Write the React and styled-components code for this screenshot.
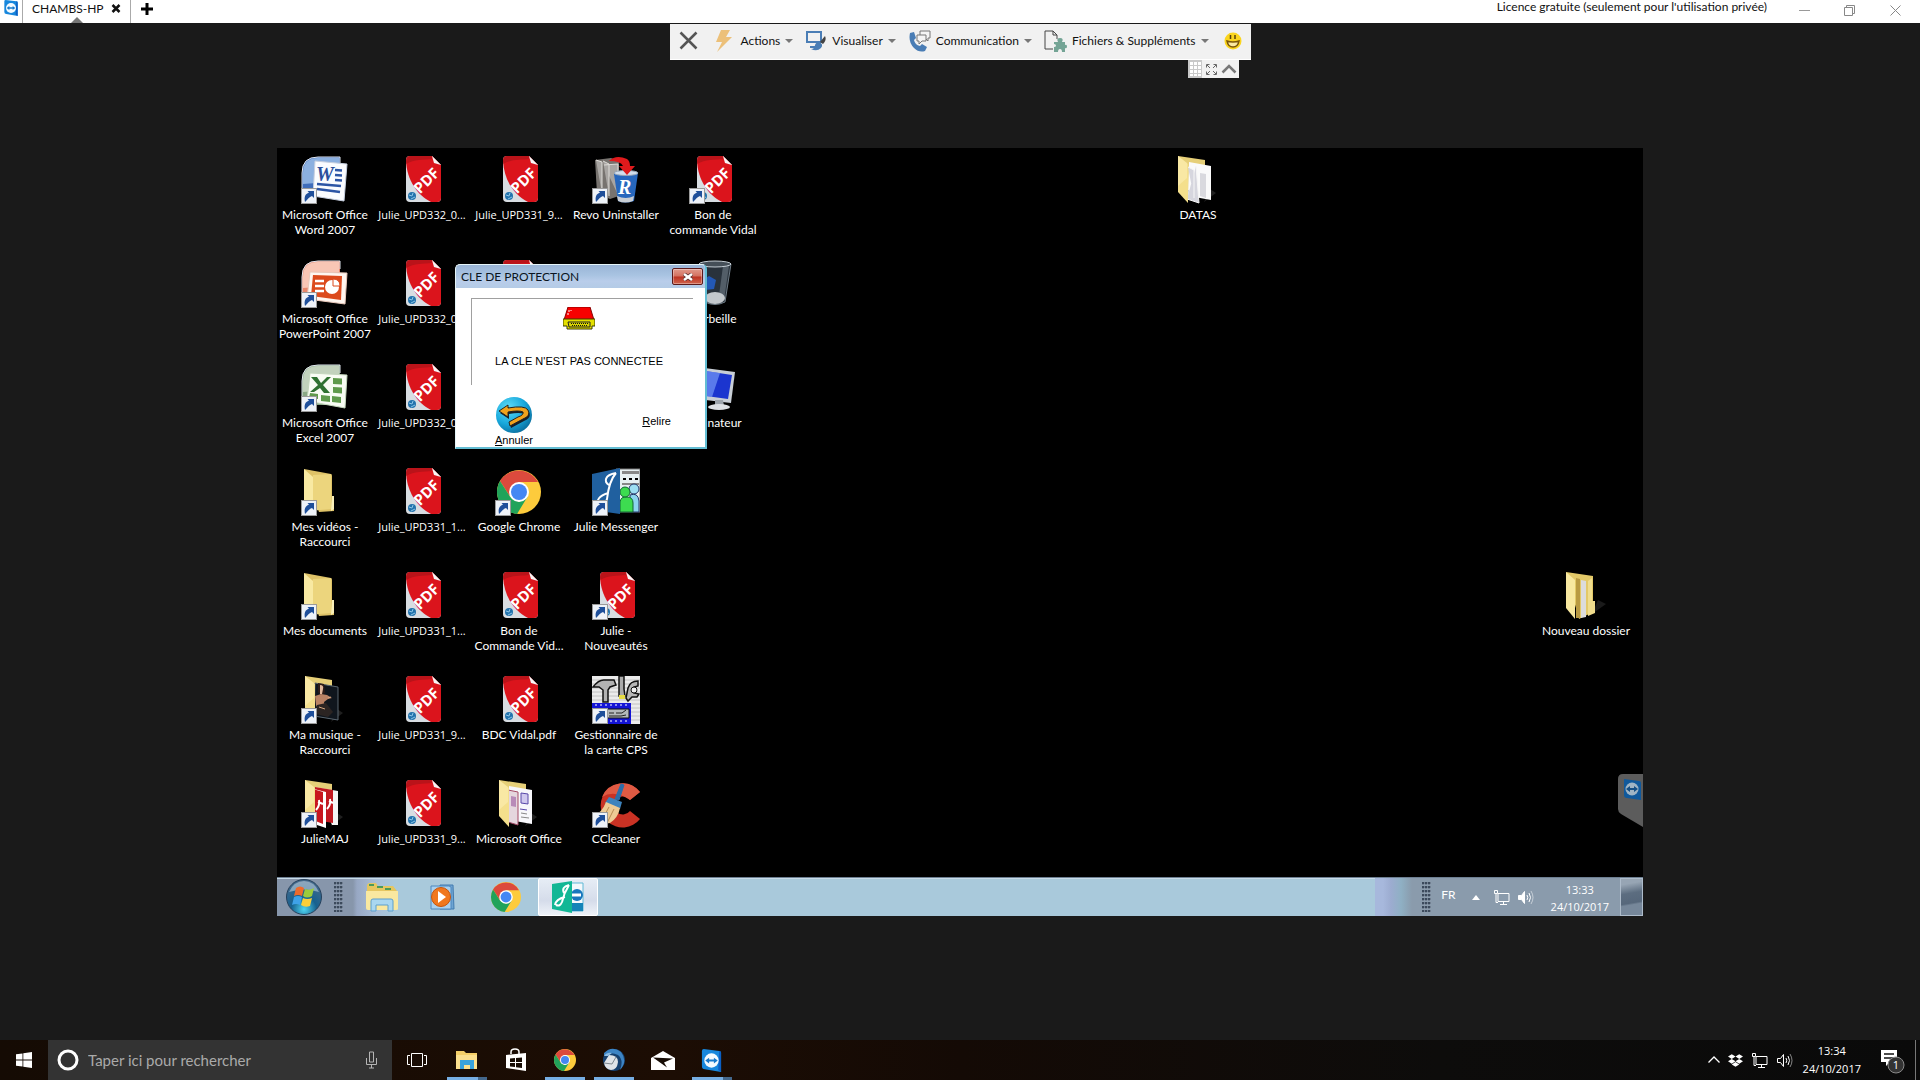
import React from 'react';
import styled, { createGlobalStyle, css } from 'styled-components';
import { FaDropbox } from 'react-icons/fa';

const GlobalStyle = createGlobalStyle`
  * {
    box-sizing: border-box;
  }

  body {
    margin: 0;
    background: #1a1a1a;
    font-family: Lato, 'Open Sans', sans-serif;
    font-size: 12px;
    line-height: 15px;
  }

  button {
    margin: 0;
    padding: 0;
    border: 0;
    background: none;
    color: inherit;
    font: inherit;
    cursor: default;
  }

  svg {
    display: block;
    flex-shrink: 0;
  }
`;

const Page = styled.div`
  display: grid;
  grid-template-rows: 23px 1fr 40px;
  min-height: 100vh;
`;

/* ---------- window title bar ---------- */

const TitleBar = styled.header`
  display: flex;
  align-items: flex-start;
  background: #fff;
  color: #111;
  line-height: 13px;
  overflow: hidden;
`;

const AppBadge = styled.div`
  width: 22px;
  padding-left: 3px;
`;

const SessionTab = styled.div`
  position: relative;
  display: flex;
  align-items: center;
  justify-content: space-between;
  width: 109px;
  height: 23px;
  padding: 0 9px 7px;
  border: solid #aaa;
  border-width: 0 1px;

  &::after {
    content: '';
    position: absolute;
    left: 48px;
    bottom: 0;
    border: solid transparent;
    border-width: 0 6px 6px;
    border-bottom-color: #777;
  }
`;

const NewTab = styled.button`
  height: 17px;
  padding-left: 10px;
`;

const Licence = styled.span`
  margin-left: auto;
  margin-right: 32px;
`;

const WindowControls = styled.div`
  display: flex;
  gap: 34px;
  height: 20px;
  align-items: center;
  padding-right: 19px;
`;

/* ---------- viewer ---------- */

const Viewer = styled.main`
  position: relative;
  display: flex;
  align-items: center;
  justify-content: center;
  padding-top: 1px;
`;

const FloatingBar = styled.div`
  position: absolute;
  top: 1px;
  left: 0;
  right: 0;
  width: max-content;
  margin: 0 auto;
  display: flex;
  flex-direction: column;
  align-items: flex-end;
`;

const Toolbar = styled.div`
  display: flex;
  align-items: center;
  gap: 12px;
  height: 36px;
  padding: 0 9px 2px;
  background: #f1f1f1;
  border-bottom: 1px solid #fff;
  color: #111;
`;

const EndSession = styled.button`
  margin-right: 4px;
`;

const Feedback = styled.button`
  margin-left: 3px;
`;

const ToolButton = styled.button`
  display: flex;
  align-items: center;
  gap: 5px;
  height: 30px;
`;

const Caret = styled.span`
  border: solid transparent;
  border-width: 4px 4px 0;
  border-top-color: #777;
`;

const ToolbarHandle = styled.div`
  display: flex;
  align-items: center;
  gap: 4px;
  height: 18px;
  margin-right: 12px;
  padding-right: 2px;
  background: #f1f1f1;
`;

const RemoteScreen = styled.section`
  position: relative;
  display: flex;
  flex-direction: column;
  width: 100%;
  max-width: 1366px;
  height: 768px;
  background: #000;
  color: #fff;
  overflow: hidden;
`;

const Desktop = styled.div`
  flex: 1;
  display: grid;
  grid-template-columns: repeat(14, 96px);
  grid-template-rows: repeat(7, 104px);
  column-gap: 1px;
  min-height: 0;
`;

const Shortcut = styled.div`
  grid-column: ${({ $col }) => $col};
  grid-row: ${({ $row }) => $row};
  display: flex;
  flex-direction: column;
  align-items: center;
  gap: 3px;
  padding-top: 8px;
  text-align: center;
  white-space: pre;
`;

const ShortcutLabel = styled.span`
  ${({ $fileName }) =>
    $fileName &&
    css`
      font-family: 'Open Sans', sans-serif;
      font-size: 11px;
    `}
`;

/* ---------- dialog ---------- */

const Dialog = styled.section`
  position: absolute;
  left: 178px;
  top: 116px;
  width: 252px;
  height: 185px;
  display: flex;
  flex-direction: column;
  border: 1px solid #e4f4f8;
  border-right: 2px solid #63bdd3;
  border-bottom: 2px solid #63bdd3;
  border-radius: 5px 5px 0 0;
  background: #fff;
  color: #000;
  overflow: hidden;
`;

const DialogTitle = styled.div`
  display: flex;
  align-items: center;
  justify-content: space-between;
  height: 23px;
  padding: 0 2px 0 5px;
  background: linear-gradient(#99b4d6, #a9c4e2 45%, #b9cdea 70%, #b4cbe6);
  color: #0a1420;
`;

const CloseButton = styled.button`
  display: grid;
  place-items: center;
  width: 31px;
  height: 17px;
  border: 1px solid #5c1a1a;
  border-radius: 2px;
  background: linear-gradient(#e09a8c, #d4705f 48%, #bc3222 52%, #d0634c);
  box-shadow: inset 0 0 0 1px #ffffff55;
`;

const DialogMessage = styled.div`
  display: flex;
  flex-direction: column;
  align-items: center;
  gap: 23px;
  height: 87px;
  margin: 10px 12px 0 15px;
  padding: 8px 7px 0 0;
  border: solid #a0a0a0;
  border-width: 1px 0 0 1px;
  font: 11px/16px 'Liberation Sans', Arial, sans-serif;
`;

const DialogActions = styled.div`
  display: flex;
  justify-content: space-between;
  align-items: flex-start;
  margin-top: 12px;
  padding: 0 34px 0 39px;
  font: 11px/14px 'Liberation Sans', Arial, sans-serif;
`;

const CancelButton = styled.button`
  display: flex;
  flex-direction: column;
  align-items: center;
`;

const RereadButton = styled.button`
  height: 48px;
`;

const SideTab = styled.div`
  position: absolute;
  right: 0;
  bottom: 89px;
`;

/* ---------- remote taskbar ---------- */

const RemoteTaskbar = styled.div`
  display: flex;
  align-items: center;
  height: 39px;
  border-top: 1px solid #6d7f92;
  box-shadow: inset 0 1px 0 #c8dbe8;
  background: linear-gradient(90deg, #8796ab 0 76px, #98a8c4 80px, #a9bfd8 100px, #a9c9db 116px);
`;

const StartOrb = styled.button`
  margin-left: 9px;
  margin-right: 12px;
`;

const Grip = styled.span`
  width: 9px;
  height: 30px;
  background-image: radial-gradient(circle at 1px 1px, #3c4a5c 1px, #b4c0ce55 2px, transparent 2px);
  background-size: 3px 4px;
`;

const RemoteApps = styled.div`
  display: flex;
  align-items: center;
  height: 38px;
  margin-left: 8px;
`;

const RemoteApp = styled.button`
  display: grid;
  place-items: center;
  width: 62px;
  height: 38px;

  ${({ $active }) =>
    $active &&
    css`
      width: 60px;
      margin-left: 1px;
      border: 1px solid #fff;
      border-radius: 2px;
      background: linear-gradient(#e6edf5, #d5dcea 60%, #eef2f8);
    `}
`;

const RemoteTray = styled.div`
  display: flex;
  align-items: center;
  height: 38px;
  margin-left: auto;
  padding-left: 47px;
  background: linear-gradient(90deg, #a7b8dc 0 8px, #9cacd0 16px, #8fb0c4 26px, #8a9bac 37px);
`;

const RemoteTrayIcons = styled.span`
  display: flex;
  gap: 7px;
  margin-left: 13px;
`;

const Language = styled.span`
  margin: 0 16px 6px 10px;
`;

const Clock = styled.time`
  min-width: 58px;
  text-align: center;
  font-family: 'Open Sans', sans-serif;
  font-size: 11px;
  line-height: ${({ $line }) => $line}px;
  white-space: pre;
`;

const RemoteClock = styled(Clock)`
  margin: 1px 11px 0 17px;
`;

const ShowDesktop = styled.button`
  width: 23px;
  height: 38px;
  border: 1px solid #aebccb;
  background: linear-gradient(170deg, #97a5b4 15%, #5c6d80 40%, #56677b 65%, #76879a 70%);
`;

/* ---------- local taskbar ---------- */

const Taskbar = styled.footer`
  display: flex;
  align-items: stretch;
  background: linear-gradient(90deg, #150b04, #1c0d04 35%, #140a05 50%, #0d0c0b 75%, #0a0a0a);
  color: #fff;
`;

const StartButton = styled.button`
  display: grid;
  place-items: center;
  width: 48px;
`;

const SearchBox = styled.label`
  display: flex;
  align-items: center;
  width: 344px;
  padding: 0 14px 0 8px;
  background: #333;
`;

const SearchInput = styled.input`
  flex: 1;
  min-width: 0;
  padding: 0 0 0 8px;
  border: 0;
  outline: 0;
  background: none;
  color: #aaa;
  font: 15px/20px Lato, 'Open Sans', sans-serif;

  &::placeholder {
    color: #aaa;
    opacity: 1;
  }
`;

const TaskButton = styled.button`
  display: grid;
  place-items: center;
  width: 49px;
  height: 40px;

  ${({ $running }) =>
    $running &&
    css`
      background: linear-gradient(#76aee3, #76aee3) center bottom / 40px 3px no-repeat;
    `}

  ${({ $stacked }) =>
    $stacked &&
    css`
      background-image: linear-gradient(90deg, #76aee3 31px, #44688c 31px);
    `}
`;

const TaskView = styled(TaskButton)`
  width: 50px;
`;

const Tray = styled.div`
  display: flex;
  align-items: center;
  gap: 8px;
  margin-left: auto;
`;

const LocalClock = styled(Clock)`
  margin-left: 2px;
`;

const Notifications = styled.button`
  margin-left: 6px;
`;

const Peek = styled.button`
  width: 5px;
  height: 40px;
  border-left: 1px solid #777;
`;

/* ---------- drawings ---------- */

const ShortcutArrow = () => (
  <g>
    <rect x="0.5" y="32.5" width="15" height="15" fill="#eef2f8" stroke="#9a9a9a" />
    <path d="M4 46c-1-5 0-8 4-9.500L6.500 35H13v7l-2-2c-3 1-4 3-7 6z" fill="#1f4f9a" />
  </g>
);

const PdfIcon = () => (
  <g>
    <path d="M12 0h22l9 9v33q0 4-4 4H12q-4 0-4-4V4q0-4 4-4z" fill="#d8dde2" />
    <path d="M12 0h22l9 9v33q0 4-4 4h-6C19 39 9 24 8 5q0-5 4-5z" fill="#db141c" />
    <path d="M12 0h22v3C26 4 16 3 8 8V4q0-4 4-4z" fill="#a31218" opacity=".6" />
    <path d="M34 0l9 9-7-2z" fill="#f6f6f6" />
    <circle cx="14" cy="40" r="4" fill="#2273ad" />
    <path d="M11 39l3 1 1-3M13 43l4-2" stroke="#8cc5e6" fill="none" />
    <text
      x="28"
      y="30"
      transform="rotate(-45 28 24)"
      textAnchor="middle"
      fill="#fff"
      fontFamily="Open Sans"
      fontWeight="700"
      fontSize="15"
    >
      PDF
    </text>
  </g>
);

const OfficeBack = ({ from, to }) => (
  <g>
    <path d="M1 32V17Q1 1 17 1h22v40H1z" fill={to} />
    <path d="M2 28V17Q2 2 17 2h21v10Q20 12 15 27z" fill={from} opacity=".8" />
    <path d="M1 32V17Q1 1 17 1h22v8" fill="none" stroke="#dfe5ee" />
  </g>
);

const WordIcon = () => (
  <g>
    <OfficeBack from="#9fc0ea" to="#3f6dba" />
    <path d="M14 5l32 3-3 37-31-5z" fill="#fafcff" stroke="#c6cfdf" />
    <text x="15" y="25" fill="#2b4f9c" fontFamily="Liberation Serif" fontStyle="italic" fontWeight="700" fontSize="20">
      W
    </text>
    <path d="M34 14l7 .5M34 19l7 .5M34 24l7 .5M16 28l24 2M16 33l23 3" stroke="#2c55a5" strokeWidth="2.500" />
  </g>
);

const PowerPointIcon = () => (
  <g>
    <OfficeBack from="#fbd6c8" to="#e8886c" />
    <path d="M9 12l37 1-2 31-38-5z" fill="#fff6f0" stroke="#e8c8ba" />
    <path d="M12 15l29 1-1 24-30-4z" fill="#dc4a1c" />
    <path d="M14 21h9M14 26h9M14 31h9" stroke="#fff" strokeWidth="2.500" />
    <circle cx="31" cy="27" r="7" fill="#fff" />
    <path d="M32 26v-7q7 0 7 7z" fill="#fff" stroke="#dc4a1c" />
  </g>
);

const ExcelIcon = () => (
  <g>
    <OfficeBack from="#cfdccb" to="#8aa886" />
    <path d="M9 9l37 2-2 33-38-7z" fill="#f8fcf4" stroke="#c4d6bd" />
    <path
      d="M32 14l9 .5v6l-9-.5zM32 23l9 .5v6l-9-.8zM31 32l9 1v6l-9-1zM20 31l9 1v6l-9-1zM9 29l8 1v5l-9-1z"
      fill="#5f9a4c"
    />
    <path d="M10 13h6l4 6 6-6h4l-8 8 7 8h-6l-4-5-6 4H9l8-7z" fill="#2f7131" />
  </g>
);

const FolderIcon = () => (
  <g>
    <path d="M3 1l27 5q1 0 1 2v22h2v13l-15 1z" fill="#dec267" />
    <path d="M12 7l18-1v35L8 43z" fill="#ecd57d" />
    <path d="M3 1l9 8v33l-9-9z" fill="#f8e9a2" />
    <path d="M31 28h2v13l-3 2z" fill="#f9efb9" />
  </g>
);

const OpenFolder = ({ children }) => (
  <g>
    <path d="M30 46l12-9-6-4z" fill="#333" opacity=".6" />
    <path d="M4 0l27 4v30H4z" fill="#e6cf78" />
    {children}
    <path d="M4 0l10 8v39L4 36z" fill="#f4df8c" />
    <path d="M4 0l9 7v15L4 30z" fill="#fbefb4" opacity=".6" />
  </g>
);

const DocsFolderIcon = () => (
  <OpenFolder>
    <path d="M15 6l22 4v34l-11-2-12-2z" fill="#fafafa" />
    <path d="M14 11l6 3v28M22 10l3 37-12-4" fill="#d6d6de" stroke="#f6f6f6" />
    <path d="M26 17l6 1v24l-6-2z" fill="#d9d9de" />
  </OpenFolder>
);

const NewFolderIcon = () => (
  <g>
    <path d="M30 42l14-10-8-4z" fill="#333" opacity=".5" />
    <path d="M4 0l27 4v36l-14 7z" fill="#e3c968" />
    <path d="M14 6l4 1v39h-4z" fill="#b99a42" />
    <path d="M19 8l5 1v36l-5 1z" fill="#dcdcdc" />
    <path d="M26 9l4-3v23h3v12l-7 3z" fill="#f0dd8d" />
    <path d="M4 0l9 8v39L4 36z" fill="#f8e8a0" />
  </g>
);

const MusicFolderIcon = () => (
  <OpenFolder>
    <path d="M14 7l23 4v33l-24-4z" fill="#10161d" stroke="#5a6670" />
    <path d="M17 7l6 1 1 9-4 2-3-3z" fill="#2e1c18" />
    <path d="M19 9q4 0 3 4l-1 5h-2z" fill="#e0b89c" />
    <path d="M14 20l6-2 6 1 5 3-4 1-4 3 1 7-6 2-3-6z" fill="#b98264" />
    <path d="M16 29l9-2 7 9-5 5-12-3z" fill="#2b2422" />
    <path d="M27 22l3-1M18 31l6 2" stroke="#d8a880" />
  </OpenFolder>
);

const MajFolderIcon = () => (
  <OpenFolder>
    <path d="M14 7l23 4v34l-6 0z" fill="#f5f5f5" />
    <path d="M14 7l18 3v33l-18-3z" fill="#c21820" />
    <path d="M13 9l12 3v36l-12-4z" fill="#fff" />
    <path d="M12 9l10 3v32l-10-4z" fill="#c8161e" />
    <path d="M15 30q4-4 3-10M17 22l5 2M26 29q4-4 3-10M28 21l4 2" stroke="#fff" strokeWidth="2" fill="none" />
  </OpenFolder>
);

const OfficeFolderIcon = () => (
  <OpenFolder>
    <path d="M14 6l23 4v34l-23-4z" fill="#f7f7fb" />
    <path d="M13 10l10 2v33l-10-3z" fill="#e5d6de" stroke="#a44a66" />
    <path d="M16 16l5 1v10l-5-1z" fill="#b88ab8" />
    <path d="M26 13l7 1v10l-7-1zM25 29l7 1" fill="#cfc8ee" stroke="#5848a8" />
    <path d="M26 33l6 1M26 37l8 1" stroke="#888" />
  </OpenFolder>
);

const RevoIcon = () => (
  <g>
    <path d="M3 4l16-2 8 3v35l-9 3-13-6z" fill="#77736f" />
    <path d="M4 4l6 2v32M11 5l6 3v32M12 9l14-1v31" fill="#a8a5a2" stroke="#dedcd8" />
    <path d="M22 18l24-1-4 28q-9 3-16 0z" fill="#2767bd" />
    <ellipse cx="34" cy="17" rx="12" ry="2.500" fill="#d2deec" stroke="#96a5b6" />
    <path d="M25 40q9 4 17 0l-1 5q-8 3-15 0z" fill="#c9ced4" />
    <path d="M17 5Q24-2 35 3q3 2 3 7h5l-8 9-8-9h4q-2-5-14-5z" fill="#e01a1c" />
    <text x="26" y="38" fill="#fff" fontFamily="Liberation Serif" fontStyle="italic" fontWeight="700" fontSize="20">
      R
    </text>
  </g>
);

const BinIcon = () => (
  <g>
    <path d="M10 4h32l-6 38q-10 5-20 0z" fill="#29323b" stroke="#6f7c87" />
    <path d="M34 6h6l-5 34-6 3z" fill="#7d8a95" opacity=".5" />
    <path d="M14 20l6-4 7 4-2 9-9 1z" fill="#2358b5" />
    <ellipse cx="26" cy="38" rx="10" ry="6" fill="#c3c8cc" />
    <ellipse cx="26" cy="4" rx="16" ry="3" fill="#454f58" stroke="#c3ccd3" />
  </g>
);

const ComputerIcon = () => (
  <g>
    <path d="M8 3l38 5-4 31-34-4z" fill="#c8ced6" />
    <path d="M10 6l33 5-4 24-29-4z" fill="#1b35cf" />
    <path d="M10 6l21 3-8 24-13-2z" fill="#6f91f4" opacity=".75" />
    <path d="M26 36h8l1 6h-9z" fill="#9da4ac" />
    <ellipse cx="30" cy="43" rx="11" ry="3" fill="#dde0e4" />
  </g>
);

const ChromeDisc = () => (
  <g>
    <circle r="22" fill="#fdcb3c" />
    <path d="M0-10h19A22 22 0 0 0-19-11l10.500 16z" fill="#dc4a3d" />
    <path d="M-19-11A22 22 0 0 0-2 22L9 4 0 10-8.700 5z" fill="#21a35a" />
    <circle r="10" fill="#fff" />
    <circle r="8" fill="#4587f3" />
  </g>
);

const JulieIcon = () => (
  <g>
    <path d="M24 1h24v43H26z" fill="#e7f0f2" stroke="#777" />
    <path d="M30 3h17v3H30zM30 15h17v2H30z" fill="#888" />
    <path d="M31 11h3m3 0h3m3 0h3" stroke="#000" strokeWidth="2" />
    <path d="M38 27q8-3 9 6v11H38z" fill="#8cd5ee" stroke="#236" />
    <circle cx="42" cy="21" r="5" fill="#9cdef2" stroke="#236" />
    <path d="M28 44V34q1-6 7-5 6 0 6 6v9z" fill="#3ddc50" stroke="#163" />
    <circle cx="33" cy="24" r="5" fill="#3ddc50" stroke="#163" />
    <path d="M0 6l28-6v46L0 42z" fill="#20609f" />
    <path d="M6 38q-3-9 10-13M24 5C12 7 12 14 17 17M24 5q-7 8-9 26-2 7-8 6" fill="none" stroke="#fff" strokeWidth="2" />
  </g>
);

const CpsIcon = () => (
  <g>
    <path d="M0 0h48v48H0z" fill="#ebebeb" />
    <path d="M0 4h48M0 8h48M0 12h48M0 16h48M0 20h48M0 24h48M39 28h9M39 32h9M39 36h9M39 40h9M39 44h9" stroke="#c2c2c2" />
    <path d="M1 11q6-8 12-7h9l2 5-6 2-2 3v12h-5V14l-4-3z" fill="#b2b2b2" stroke="#111" strokeWidth="1.500" />
    <path d="M27 0h5v13l1 7h-6z" fill="#aaa" stroke="#111" strokeWidth="1.500" />
    <path d="M27 19h6v4h-6z" fill="#e7dc44" />
    <path d="M34 22l2-10q2-7 10-7v5l-4 1v6l5 1-2 3h-5l-4 4z" fill="#b6b6b6" stroke="#111" strokeWidth="1.500" />
    <circle cx="42" cy="14" r="3" fill="#eee" stroke="#111" />
    <path d="M0 27h39v21H0z" fill="#1414d6" />
    <path d="M3 29h34M3 45h34" stroke="#fff" strokeDasharray="2 3" />
    <path d="M4 33h33v9H4z" fill="#b4b8bc" stroke="#111" />
    <path d="M17 37h5m2 0h6l4-3M17 40h12l5-1" stroke="#222" fill="none" />
  </g>
);

const CCleanerIcon = () => (
  <g>
    <path d="M48 12A22 22 0 1 0 48 39L38 31A9 9 0 1 1 38 20z" fill="#c93224" />
    <path d="M48 12A22 22 0 0 0 10 17q12-8 28 3z" fill="#df5a43" />
    <path d="M29 4l3 1-5 15-4-1z" fill="#2d6da8" stroke="#2d6da8" />
    <path d="M17 17l13 5-2 7-15-6z" fill="#3d83bd" />
    <path d="M14 22l14 6q-2 10-10 15Q9 45 1 36q9-3 13-14z" fill="#eecb94" />
    <path d="M17 27l-7 13M22 29l-7 14" stroke="#b98b52" />
  </g>
);

const TeamViewerLogo = ({ size }) => (
  <svg width={size} height={size} viewBox="0 0 24 24">
    <path d="M4 0l16 2q2 0 2 2v20L5 21q-3 0-3-3V2q0-2 2-2z" fill="#1787dd" />
    <path d="M20 2q2 0 2 2v20l-3-2z" fill="#0b5fc4" />
    <circle cx="12" cy="12" r="7.500" fill="#f3faff" />
    <path d="M5.500 12l4-3v2h5V9l4 3-4 3v-2h-5v2z" fill="#1679cc" />
  </svg>
);

const icons = {
  word: WordIcon,
  powerpoint: PowerPointIcon,
  excel: ExcelIcon,
  folder: FolderIcon,
  docs: DocsFolderIcon,
  newFolder: NewFolderIcon,
  music: MusicFolderIcon,
  maj: MajFolderIcon,
  officeFolder: OfficeFolderIcon,
  pdf: PdfIcon,
  revo: RevoIcon,
  bin: BinIcon,
  computer: ComputerIcon,
  chrome: () => (
    <g transform="translate(24 24)">
      <ChromeDisc />
    </g>
  ),
  julie: JulieIcon,
  cps: CpsIcon,
  ccleaner: CCleanerIcon,
};

// [column, row, icon, label, has shortcut arrow]
const shortcuts = [
  [1, 1, 'word', 'Microsoft Office\nWord 2007', true],
  [1, 2, 'powerpoint', 'Microsoft Office\nPowerPoint 2007', true],
  [1, 3, 'excel', 'Microsoft Office\nExcel 2007', true],
  [1, 4, 'folder', 'Mes vidéos -\nRaccourci', true],
  [1, 5, 'folder', 'Mes documents', true],
  [1, 6, 'music', 'Ma musique -\nRaccourci', true],
  [1, 7, 'maj', 'JulieMAJ', true],
  [2, 1, 'pdf', 'Julie_UPD332_0...'],
  [2, 2, 'pdf', 'Julie_UPD332_0...'],
  [2, 3, 'pdf', 'Julie_UPD332_0...'],
  [2, 4, 'pdf', 'Julie_UPD331_1...'],
  [2, 5, 'pdf', 'Julie_UPD331_1...'],
  [2, 6, 'pdf', 'Julie_UPD331_9...'],
  [2, 7, 'pdf', 'Julie_UPD331_9...'],
  [3, 1, 'pdf', 'Julie_UPD331_9...'],
  [3, 2, 'pdf', ''],
  [3, 4, 'chrome', 'Google Chrome', true],
  [3, 5, 'pdf', 'Bon de\nCommande Vid...'],
  [3, 6, 'pdf', 'BDC Vidal.pdf'],
  [3, 7, 'officeFolder', 'Microsoft Office'],
  [4, 1, 'revo', 'Revo Uninstaller', true],
  [4, 4, 'julie', 'Julie Messenger', true],
  [4, 5, 'pdf', 'Julie -\nNouveautés', true],
  [4, 6, 'cps', 'Gestionnaire de\nla carte CPS', true],
  [4, 7, 'ccleaner', 'CCleaner', true],
  [5, 1, 'pdf', 'Bon de\ncommande Vidal', true],
  [5, 2, 'bin', 'Corbeille'],
  [5, 3, 'computer', 'Ordinateur'],
  [10, 1, 'docs', 'DATAS'],
  [14, 5, 'newFolder', 'Nouveau dossier'],
];

const DesktopIcon = ({ col, row, icon, label, link }) => {
  const Drawing = icons[icon];
  return (
    <Shortcut $col={col} $row={row}>
      <svg width="48" height="48" viewBox="0 0 48 48">
        <Drawing />
        {link && <ShortcutArrow />}
      </svg>
      <ShortcutLabel $fileName={label.includes('_')}>{label}</ShortcutLabel>
    </Shortcut>
  );
};

const BoltIcon = () => (
  <svg width="22" height="22" viewBox="0 0 22 22">
    <path d="M7 0h9l-4 7h6L3 22l5-10H2z" fill="#ecc079" />
  </svg>
);

const ScreenBrushIcon = () => (
  <svg width="22" height="22" viewBox="0 0 22 22" fill="none">
    <path d="M2 2h14v10H2z" stroke="#4a7db5" strokeWidth="2" />
    <path d="M5 17h6" stroke="#4a7db5" strokeWidth="2" />
    <path d="M20 6q2 4-2 8l-3-2z" fill="#444" />
    <path d="M14 12q5 2 2 6-4 4-10 1 4 0 4-4 1-3 4-3z" fill="#4a7db5" />
  </svg>
);

const PhoneIcon = () => (
  <svg width="23" height="22" viewBox="0 0 23 22" fill="none">
    <path d="M2 3l4-1 2 6-2 2q1 5 6 6l2-2 5 3-2 4Q11 23 6 18 0 12 2 3z" fill="#4a7db5" />
    <path d="M12 1h10v7h-2v3l-3-3h-5z" stroke="#777" fill="#f4f4f4" />
    <path d="M9 5h9v6h-4l-3 3v-3H9z" stroke="#777" fill="#f4f4f4" />
  </svg>
);

const FileAddonIcon = () => (
  <svg width="23" height="22" viewBox="0 0 23 22" fill="none">
    <path d="M1 1h8l4 4v4M9 1v4h4M1 1v18h8" stroke="#444" />
    <path d="M10 12h4q-2-4 2-4t2 4h3v3q2-1 2 1.500T21 18v4h-3q0-3-2-3t-2 3h-4v-5q2 0 2-1.500T10 14z" fill="#74a495" />
  </svg>
);

const tools = [
  { label: 'Actions', Icon: BoltIcon },
  { label: 'Visualiser', Icon: ScreenBrushIcon },
  { label: 'Communication', Icon: PhoneIcon },
  { label: 'Fichiers & Suppléments', Icon: FileAddonIcon },
];

const NetworkIcon = () => (
  <svg width="17" height="17" viewBox="0 0 17 17" fill="none" stroke="#fff">
    <path d="M5 4.500h11v8H5zM10.500 13v2.500M7 15.500h7M1.500 1.500h3v3h-3zM3 5v8.500h2" />
  </svg>
);

const SpeakerIcon = ({ filled }) => (
  <svg width="17" height="17" viewBox="0 0 17 17" fill="none" stroke="#fff">
    <path d="M1.500 6.500h3l3-4v12l-3-4h-3z" fill={filled ? '#fff' : 'none'} />
    <path d="M10 6q1.500 2.500 0 5M12 4q3 4.500 0 9" />
    <path d="M14 2q4 6.500 0 13" opacity=".5" />
  </svg>
);

const FolderTaskIcon = () => (
  <svg width="22" height="22" viewBox="0 0 22 22">
    <path d="M0 2h8l2 2h11v16H0z" fill="#f4cf68" />
    <path d="M0 6h21v14H0z" fill="#fbe08e" />
    <path d="M4 20v-9h14v9h-4v-4H8v4z" fill="#39a3dc" />
  </svg>
);

const ProtectionDialog = () => (
  <Dialog role="dialog" aria-labelledby="dialog-title">
    <DialogTitle>
      <span id="dialog-title">CLE DE PROTECTION</span>
      <CloseButton aria-label="Fermer">
        <svg width="10" height="8" viewBox="0 0 10 8">
          <path d="M1 1l8 6M9 1L1 7" stroke="#5b3030" strokeWidth="4" />
          <path d="M1 1l8 6M9 1L1 7" stroke="#fff" strokeWidth="2.500" />
        </svg>
      </CloseButton>
    </DialogTitle>
    <DialogMessage>
      <svg width="32" height="23" viewBox="0 0 32 23">
        <path d="M5 0h22l4 13H1z" fill="#f80000" stroke="#800" />
        <path d="M6 3v2M5 6v2M8 3v1" stroke="#fff" />
        <path d="M0 12h32v7h-3v3H4v-3H0z" fill="#e4e000" stroke="#3c3c00" />
        <path d="M5 15h22v5H6z" fill="#d8d400" stroke="#222" />
        <path d="M8 16.500h17M9 18.500h15" stroke="#111" strokeDasharray="1 1" />
      </svg>
      <span>LA CLE N'EST PAS CONNECTEE</span>
    </DialogMessage>
    <DialogActions>
      <CancelButton>
        <svg width="36" height="36" viewBox="0 0 36 36">
          <defs>
            <radialGradient id="ball" cx=".35" cy=".3" r=".75">
              <stop offset="0" stopColor="#5edcf8" />
              <stop offset=".6" stopColor="#18a8dc" />
              <stop offset="1" stopColor="#0b6f9f" />
            </radialGradient>
          </defs>
          <circle cx="18" cy="18" r="18" fill="url(#ball)" />
          <path
            d="M3 14l9-6v3q17-3 20 2 3 6-5 9l-13 7-1-4 9-5q6-2 5-5-4-2-15 0v5z"
            transform="translate(1 2)"
            fill="#16202a"
          />
          <path d="M3 14l9-6v3q17-3 20 2 3 6-5 9l-13 7-1-4 9-5q6-2 5-5-4-2-15 0v5z" fill="#f0a21c" stroke="#222" />
        </svg>
        <span>
          <u>A</u>nnuler
        </span>
      </CancelButton>
      <RereadButton>
        <u>R</u>elire
      </RereadButton>
    </DialogActions>
  </Dialog>
);

const Windows7Taskbar = () => (
  <RemoteTaskbar>
    <StartOrb aria-label="Démarrer">
      <svg width="36" height="36" viewBox="0 0 36 36">
        <defs>
          <radialGradient id="orb" cx=".5" cy=".85" r=".8">
            <stop offset="0" stopColor="#4fd6f2" />
            <stop offset=".45" stopColor="#16618f" />
            <stop offset="1" stopColor="#456a8c" />
          </radialGradient>
        </defs>
        <circle cx="18" cy="18" r="17.500" fill="url(#orb)" stroke="#26415c" />
        <path d="M3 13Q8 2 18 2t15 11q-15-5-30 0z" fill="#d5e2ec" opacity=".5" />
        <path d="M10 9q4-3 8 0l-2 8q-4-2-8 0z" fill="#ef6a2c" />
        <path d="M19 10q5 2 9-1l-2 8q-5 3-9 0z" fill="#9ccb3c" />
        <path d="M8 18q4-2 8 0l-2 8q-4-2-8 0z" fill="#3fa2e8" />
        <path d="M17 19q4 2 9 0l-2 8q-5 2-9-1z" fill="#fbcf3a" />
      </svg>
    </StartOrb>
    <Grip />
    <RemoteApps>
      <RemoteApp aria-label="Explorateur">
        <svg width="34" height="30" viewBox="0 0 34 30">
          <path d="M2 4q0-3 3-3h6l2 3h15l4 5v17H2z" fill="#e5c660" />
          <path d="M4 3h5M12 5h6M20 7h6" stroke="#4a9a5a" strokeWidth="2" />
          <path d="M1 9h32v18q0 1-2 1H3q-2 0-2-2z" fill="#f9e8a0" />
          <path d="M6 29V19q0-2 2-2h18q2 0 2 2v10h-5v-6H11v6z" fill="#a9d7f0" stroke="#5d9fcc" />
        </svg>
      </RemoteApp>
      <RemoteApp aria-label="Lecteur multimédia">
        <svg width="28" height="27" viewBox="0 0 28 27">
          <path d="M10 1h13l1 24H10z" fill="#6fa5d2" stroke="#427bb0" />
          <path d="M1 2h18l2 1v22H1z" fill="#a9d0ee" stroke="#4c88bf" />
          <circle cx="11" cy="13" r="9.500" fill="#f0771d" stroke="#c6550c" />
          <path d="M8 7l8 6-8 6z" fill="#fff" />
        </svg>
      </RemoteApp>
      <RemoteApp aria-label="Chrome">
        <svg width="30" height="30" viewBox="-22 -22 44 44">
          <ChromeDisc />
        </svg>
      </RemoteApp>
      <RemoteApp $active aria-label="Julie">
        <svg width="32" height="32" viewBox="0 0 32 32">
          <path d="M18 2h13v28H18z" fill="#f4f8fb" stroke="#5fb9d6" />
          <circle cx="25" cy="14" r="6" fill="#1877bd" />
          <path d="M18 22h13v8H18z" fill="#1584b8" />
          <path d="M20 14h9" stroke="#fff" strokeWidth="3" />
          <path d="M0 3l20-3v32L0 28z" fill="#12b795" />
          <path d="M3 24q1-6 10-8M17 4q-8 2-5 8M17 4q-5 8-7 17-2 5-6 3" fill="none" stroke="#fff" strokeWidth="2" />
        </svg>
      </RemoteApp>
    </RemoteApps>
    <RemoteTray>
      <Grip />
      <Language>FR</Language>
      <svg width="8" height="5" viewBox="0 0 8 5">
        <path d="M4 0l4 5H0z" fill="#fff" />
      </svg>
      <RemoteTrayIcons>
        <NetworkIcon />
        <SpeakerIcon filled />
      </RemoteTrayIcons>
      <RemoteClock $line={17}>{'13:33\n24/10/2017'}</RemoteClock>
      <ShowDesktop aria-label="Bureau" />
    </RemoteTray>
  </RemoteTaskbar>
);

const Windows10Taskbar = () => (
  <Taskbar>
    <StartButton aria-label="Démarrer">
      <svg width="16" height="16" viewBox="0 0 16 16">
        <path d="M0 2.300l6.500-.9v6.200H0zM7.300 1.300L16 0v7.600H7.300zM0 8.400h6.500v6.200L0 13.700zM7.300 8.400H16V16l-8.700-1.200z" fill="#fff" />
      </svg>
    </StartButton>
    <SearchBox>
      <svg width="24" height="24" viewBox="0 0 24 24" fill="none">
        <circle cx="12" cy="12" r="9" stroke="#fff" strokeWidth="3" />
      </svg>
      <SearchInput placeholder="Taper ici pour rechercher" aria-label="Taper ici pour rechercher" />
      <svg width="13" height="18" viewBox="0 0 13 18" fill="none" stroke="#b5b5b5">
        <path d="M4.500 1h4v10h-4zM1.500 7v6.500h10V7M6.500 14v3M4 17h5" />
      </svg>
    </SearchBox>
    <TaskView aria-label="Vue des tâches">
      <svg width="20" height="16" viewBox="0 0 20 16" fill="none" stroke="#fff">
        <path d="M4.500 1.500h11v13h-11zM3 3.500H.5v9H3M17 3.500h2.500v9H17" />
      </svg>
    </TaskView>
    <TaskButton $running $stacked aria-label="Explorateur">
      <FolderTaskIcon />
    </TaskButton>
    <TaskButton aria-label="Store">
      <svg width="22" height="24" viewBox="0 0 22 24">
        <path d="M6 6V4q0-3 4-3t4 3v2" fill="none" stroke="#fff" strokeWidth="1.500" />
        <path d="M1 7l20-2v18L1 20z" fill="#fff" />
        <path d="M5 10.500l5-.5v4H5zM11 10l6-.5V14h-6zM5 15h5v4l-5-.5zM11 15h6v5l-6-.7z" fill="#160b04" />
      </svg>
    </TaskButton>
    <TaskButton $running aria-label="Chrome">
      <svg width="22" height="22" viewBox="-22 -22 44 44">
        <ChromeDisc />
      </svg>
    </TaskButton>
    <TaskButton $running aria-label="Thunderbird">
      <svg width="25" height="24" viewBox="0 0 25 24">
        <circle cx="13" cy="12" r="11" fill="#16406f" />
        <path d="M3 5Q11-3 20 4q7 9-1 18 4-10-2-15Q9 3 3 8z" fill="#3d84c4" />
        <path d="M3 15l5-8q9 0 9 7-1 8-7 8-6-1-7-7z" fill="#dfe3e8" />
        <path d="M3 15l8 1 4-7" stroke="#7d8790" fill="none" />
        <path d="M3 8q3-4 8-3l-4 3z" fill="#8cbce4" />
      </svg>
    </TaskButton>
    <TaskButton aria-label="Courrier">
      <svg width="24" height="19" viewBox="0 0 24 19">
        <path d="M0 7l12-7 12 7v12H0z" fill="#fff" />
        <path d="M2 6.500l20 1-9 4 3 5z" fill="#160b04" />
      </svg>
    </TaskButton>
    <TaskButton $running $stacked aria-label="TeamViewer">
      <TeamViewerLogo size={23} />
    </TaskButton>
    <Tray>
      <svg width="12" height="8" viewBox="0 0 12 8" fill="none">
        <path d="M.5 6.500L6 1l5.500 5.500" stroke="#fff" strokeWidth="1.300" />
      </svg>
      <FaDropbox size={15} />
      <NetworkIcon />
      <SpeakerIcon />
      <LocalClock $line={18}>{'13:34\n24/10/2017'}</LocalClock>
      <Notifications aria-label="Notifications">
        <svg width="32" height="28" viewBox="0 0 32 28">
          <path d="M6 4h16v12h-7l-4 4v-4H6z" fill="#fff" />
          <path d="M9 8h10M9 12h10" stroke="#111" strokeWidth="1.500" />
          <circle cx="21" cy="19" r="8" fill="#333" stroke="#8a8a8a" />
          <text x="21" y="23" textAnchor="middle" fill="#fff" fontFamily="Open Sans" fontSize="11">
            1
          </text>
        </svg>
      </Notifications>
      <Peek aria-label="Bureau" />
    </Tray>
  </Taskbar>
);

const App = () => {
  return (
    <>
      <GlobalStyle />
      <Page>
        <TitleBar>
          <AppBadge>
            <TeamViewerLogo size={16} />
          </AppBadge>
          <SessionTab>
            <span>CHAMBS-HP</span>
            <svg width="10" height="9" viewBox="0 0 10 9">
              <path d="M1.500 1l7 7M8.500 1l-7 7" stroke="#111" strokeWidth="2.500" />
            </svg>
          </SessionTab>
          <NewTab aria-label="Nouvel onglet">
            <svg width="12" height="12" viewBox="0 0 12 12">
              <path d="M6 0v12M0 6h12" stroke="#000" strokeWidth="3" />
            </svg>
          </NewTab>
          <Licence>Licence gratuite (seulement pour l'utilisation privée)</Licence>
          <WindowControls>
            <button aria-label="Réduire">
              <svg width="11" height="11" viewBox="0 0 11 11">
                <path d="M0 5.500h11" stroke="#999" />
              </svg>
            </button>
            <button aria-label="Restaurer">
              <svg width="12" height="11" viewBox="0 0 12 11" fill="none" stroke="#888">
                <path d="M.5 2.500h8v8h-8zM2.500 2V.5h8v8H9" />
              </svg>
            </button>
            <button aria-label="Fermer">
              <svg width="11" height="11" viewBox="0 0 11 11">
                <path d="M.5.5l10 10M10.500.5l-10 10" stroke="#888" />
              </svg>
            </button>
          </WindowControls>
        </TitleBar>

        <Viewer>
          <RemoteScreen>
            <Desktop>
              {shortcuts.map(([col, row, icon, label, link]) => (
                <DesktopIcon key={`${col}-${row}`} col={col} row={row} icon={icon} label={label} link={link} />
              ))}
            </Desktop>
            <Windows7Taskbar />
            <ProtectionDialog />
            <SideTab>
              <svg width="25" height="53" viewBox="0 0 25 53">
                <path d="M25 0H5Q0 0 0 5v30q0 3 3 5l22 13z" fill="#5c5c5c" />
                <path d="M6 5l15 2q2 0 2 2v17L9 24q-3 0-3-3z" fill="#10599c" />
                <circle cx="14" cy="15" r="6.500" fill="#9fb4c4" />
                <path d="M8 15l4-3v2h4v-2l4 3-4 3v-2h-4v2z" fill="#154f85" />
              </svg>
            </SideTab>
          </RemoteScreen>

          <FloatingBar>
            <Toolbar>
              <EndSession aria-label="Fermer la session">
                <svg width="19" height="19" viewBox="0 0 19 19">
                  <path d="M1.500 1.500l16 16M17.500 1.500l-16 16" stroke="#555" strokeWidth="2.500" />
                </svg>
              </EndSession>
              {tools.map(({ label, Icon }) => (
                <ToolButton key={label}>
                  <Icon />
                  <span>{label}</span>
                  <Caret />
                </ToolButton>
              ))}
              <Feedback aria-label="Commentaires">
                <svg width="18" height="18" viewBox="0 0 18 18">
                  <circle cx="9" cy="9" r="8.500" fill="#fbd51e" />
                  <path d="M6.500 3v4M11 3v4" stroke="#5a4208" strokeWidth="1.500" />
                  <path d="M3 9q6 2 12 0-1 6-6 6T3 9z" fill="#fbe9a0" stroke="#7a5608" strokeWidth="1.500" />
                </svg>
              </Feedback>
            </Toolbar>
            <ToolbarHandle>
              <svg width="14" height="18" viewBox="0 0 14 18">
                <path d="M0 0h14v18H0z" fill="#c9c9c9" />
                <path d="M3.500 2v14M7.500 2v14M11.500 2v14" stroke="#fff" strokeWidth="3" strokeDasharray="3 1" />
              </svg>
              <svg width="11" height="11" viewBox="0 0 11 11" fill="none" stroke="#666">
                <path d="M.5 3.500v-3h3M7.500.5h3v3M10.500 7.500v3h-3M3.500 10.500h-3v-3M1 1l3 3M10 1L7 4M10 10L7 7M1 10l3-3" />
              </svg>
              <svg width="16" height="10" viewBox="0 0 16 10">
                <path d="M1.500 8.500L8 2l6.500 6.500" fill="none" stroke="#777" strokeWidth="2.500" />
              </svg>
            </ToolbarHandle>
          </FloatingBar>
        </Viewer>

        <Windows10Taskbar />
      </Page>
    </>
  );
};

export default App;
